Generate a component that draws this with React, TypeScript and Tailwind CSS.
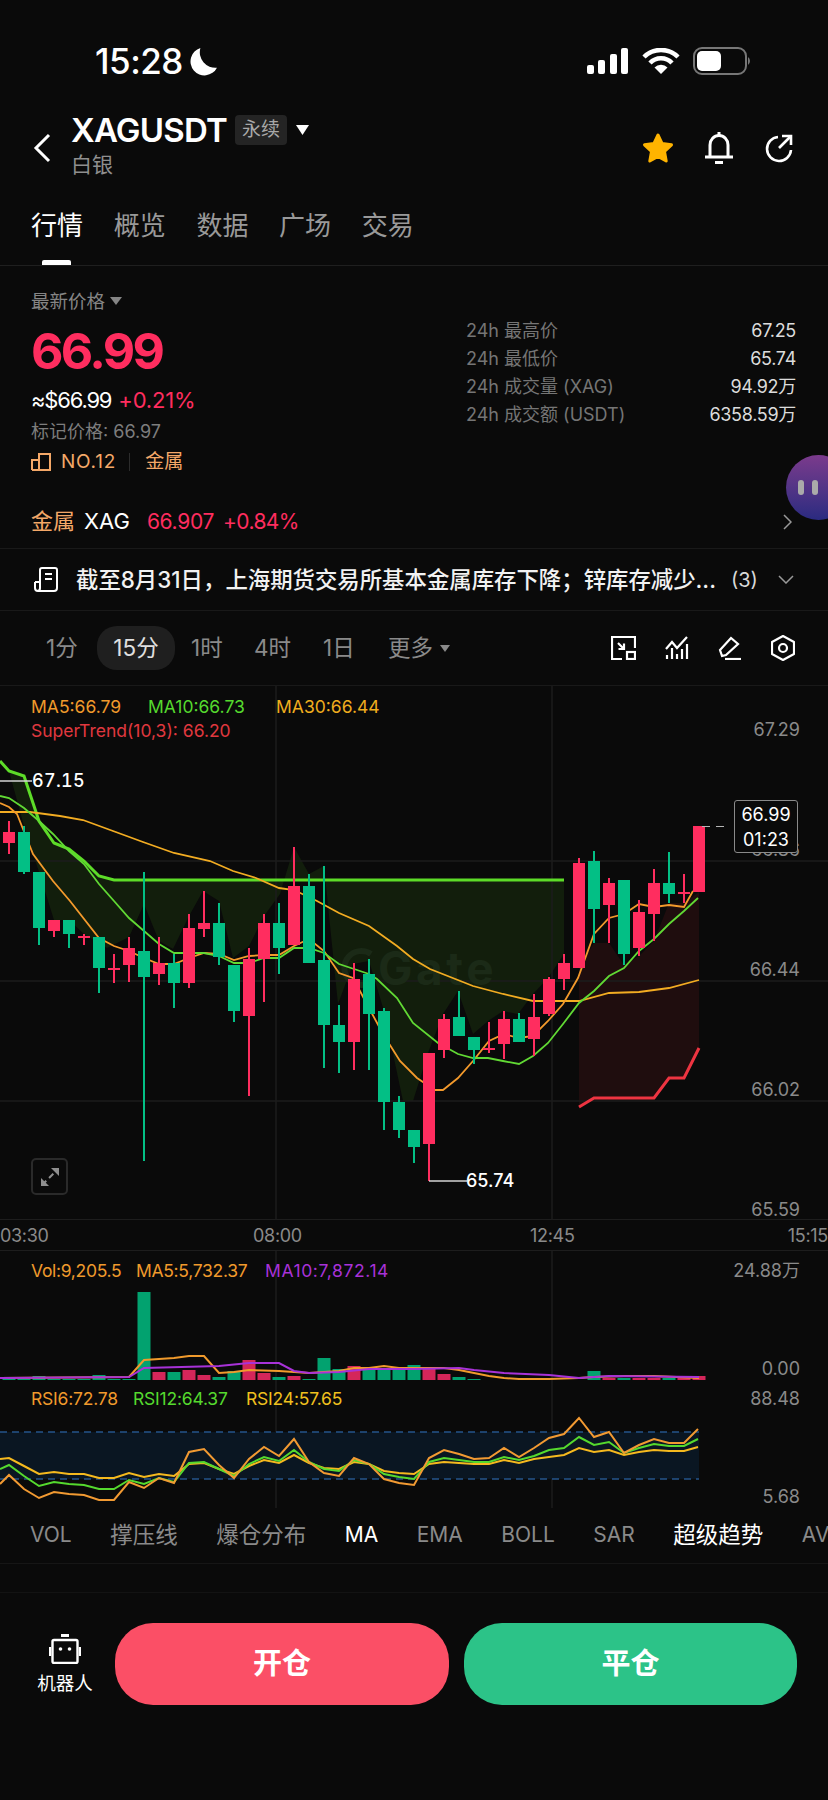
import React from "react";

const LATIN = "font-['Inter','Noto_Sans_CJK_SC',sans-serif]";

// wickTop, bodyTop, bodyBottom, wickBottom, red
const candles: [number, number, number, number, number][] = [
  [820, 831, 842, 853, 1], [825, 831, 871, 873, 0], [871, 871, 927, 944, 0], [919, 919, 930, 936, 1],
  [919, 919, 933, 947, 0], [933, 935, 937, 944, 1], [936, 936, 967, 992, 0], [953, 967, 969, 982, 1],
  [936, 947, 964, 981, 1], [871, 950, 976, 1160, 0], [936, 962, 973, 984, 1], [953, 962, 982, 1007, 0],
  [913, 927, 982, 987, 1], [890, 922, 928, 936, 1], [902, 922, 956, 964, 0], [964, 964, 1010, 1021, 0],
  [947, 958, 1015, 1095, 1], [913, 922, 958, 1001, 1], [902, 922, 947, 973, 0], [846, 885, 944, 944, 1],
  [873, 885, 962, 962, 0], [865, 959, 1024, 1067, 0], [1004, 1024, 1041, 1072, 0], [962, 978, 1041, 1069, 1],
  [958, 973, 1013, 1069, 0], [1007, 1010, 1101, 1129, 0], [1095, 1101, 1129, 1137, 0], [1129, 1129, 1146, 1162, 0],
  [1052, 1052, 1143, 1180, 1], [1013, 1018, 1049, 1057, 1], [990, 1016, 1035, 1035, 0], [1036, 1036, 1049, 1063, 0],
  [1021, 1047, 1049, 1052, 1], [1010, 1018, 1043, 1058, 1], [1012, 1018, 1041, 1041, 0], [993, 1016, 1038, 1055, 1],
  [976, 978, 1013, 1015, 1], [953, 962, 978, 989, 1], [857, 862, 967, 967, 1], [850, 860, 908, 942, 0],
  [877, 882, 904, 942, 1], [879, 879, 953, 964, 0], [899, 911, 947, 955, 1], [868, 882, 913, 940, 1],
  [851, 882, 893, 902, 0], [873, 891, 893, 902, 1], [825, 825, 891, 891, 1],
];

const vols = [1, 1, 4, 1, 1, 1, 5, 1, 1, 88, -8, 8, -10, -5, 3, 9, -20, -7, 3, -4, 1, 22, 11, -14, 12, 10, 10, 15, -11, -6, 3, 1, 0, 0, 0, 0, 0, 0, 0, 9, -2, 2, -2, -2, 2, -3, -4];

const bull = "0,760 9,770 24,775 39,820 54,842 69,848 84,860 99,875 114,879 564,879";
const bullBottom = "564,953 548,977 533,993 518,1013 503,1010 488,1020 473,1033 458,990 443,1013 428,1052 413,1100 403,1100 384,1010 369,960 353,963 338,1003 324,865 309,873 294,846 280,893 264,915 249,945 233,957 219,900 203,890 189,915 173,948 159,940 144,903 129,936 107,947 84,933 69,919 54,919 39,871 24,825 9,770";

const ma5 = "0,802 9,806 17,813 33,853 53,880 70,900 99,937 114,945 129,950 144,957 159,963 174,963 189,957 204,952 219,953 234,959 249,955 264,954 279,954 294,945 309,938 324,950 339,972 353,977 369,1007 383,1033 400,1060 417,1077 435,1089 443,1089 458,1077 473,1060 489,1040 504,1033 519,1037 533,1035 548,1020 563,1003 578,977 594,933 609,917 624,913 639,903 654,906 669,904 684,906 693,890";
const ma10 = "0,795 9,797 24,807 39,820 53,833 69,850 84,863 99,883 114,900 129,917 144,930 159,943 174,952 189,952 204,952 219,955 234,962 249,962 264,957 279,957 294,947 309,947 324,952 339,963 354,968 369,973 377,978 397,997 413,1022 438,1042 458,1053 473,1057 488,1057 503,1060 519,1063 533,1055 548,1042 563,1023 579,1002 594,990 609,975 624,967 639,950 654,938 669,923 684,910 698,897";
const ma30 = "0,811 30,811 60,815 83,819 113,830 143,841 174,852 210,860 233,870 256,877 279,887 294,889 317,900 339,912 369,925 397,945 413,958 430,968 473,985 503,993 533,1000 563,1000 579,1000 609,992 639,991 669,987 699,979";

const volMa5 = "0,1377 129,1376 144,1359 159,1358 174,1357 189,1355 204,1355 219,1372 234,1371 249,1369 279,1370 309,1372 339,1370 354,1367 369,1367 384,1365 399,1367 414,1367 444,1367 459,1369 474,1372 489,1375 504,1377 519,1378 549,1378 579,1377 594,1376 624,1375 654,1375 699,1377";
const volMa10 = "0,1377 129,1376 144,1367 219,1365 249,1362 279,1362 294,1370 309,1372 339,1371 369,1368 414,1368 459,1367 474,1369 504,1372 549,1374 579,1377 609,1375 699,1376";
const rsi6 = "0,1483 9,1474 24,1488 39,1497 54,1491 69,1493 84,1494 99,1499 114,1499 129,1481 144,1487 159,1477 174,1482 189,1451 204,1448 219,1464 234,1477 249,1458 264,1446 279,1455 294,1438 309,1461 324,1472 339,1475 354,1457 369,1463 384,1478 399,1482 414,1484 429,1457 444,1449 459,1453 474,1458 489,1457 504,1447 519,1456 534,1447 549,1437 564,1433 579,1417 594,1436 609,1431 624,1452 639,1444 654,1438 669,1442 684,1442 698,1428";
const rsi12 = "0,1468 9,1464 24,1475 39,1485 54,1481 69,1483 84,1484 99,1488 114,1488 129,1479 144,1483 159,1477 174,1481 189,1462 204,1461 219,1468 234,1475 249,1463 264,1456 279,1460 294,1449 309,1461 324,1468 339,1470 354,1459 369,1463 384,1473 399,1476 414,1478 429,1461 444,1457 459,1459 474,1461 489,1461 504,1456 519,1459 534,1455 549,1449 564,1447 579,1436 594,1444 609,1441 624,1452 639,1447 654,1443 669,1445 684,1445 698,1438";
const rsi24 = "0,1458 9,1457 24,1465 39,1473 54,1471 69,1473 84,1473 99,1477 114,1477 129,1472 144,1476 159,1473 174,1475 189,1463 204,1462 219,1468 234,1473 249,1465 264,1459 279,1462 294,1454 309,1462 324,1467 339,1468 354,1461 369,1463 384,1470 399,1472 414,1473 429,1463 444,1461 459,1462 474,1463 489,1463 504,1459 519,1462 534,1458 549,1456 564,1454 579,1447 594,1451 609,1449 624,1454 639,1451 654,1449 669,1450 684,1450 698,1446";

function MainChart() {
  return (
    <svg viewBox="0 685 828 534" className="absolute inset-0 w-[828px] h-[534px]">
      <polygon points={bull + " " + bullBottom} fill="#121e0c" />
      <polygon points="579,966 594,942 609,942 624,964 639,955 654,940 669,902 684,902 699,891 699,1047 684,1077 669,1077 654,1097 594,1097 579,1106" fill="#1f0d0e" />
      {[860, 980, 1100].map((y) => (
        <line key={y} x1="0" x2="828" y1={y} y2={y} stroke="#1d1d1d" strokeWidth="1.5" />
      ))}
      {[276, 552].map((x) => (
        <line key={x} x1={x} x2={x} y1="685" y2="1219" stroke="#1d1d1d" strokeWidth="1.5" />
      ))}
      <path d="M371 953 A17 17 0 1 0 371 981" fill="none" stroke="#1b2a17" strokeWidth="6" />
      <text x="378" y="984" fill="#1b2a17" fontSize="46" fontWeight="700" letterSpacing="3.5" fontFamily="Inter, sans-serif">Gate</text>
      <polyline points={bull} fill="none" stroke="#5ddc28" strokeWidth="3" />
      <polyline points="579,1106 594,1097 654,1097 669,1077 684,1077 699,1047" fill="none" stroke="#ee3441" strokeWidth="3" />
      <polyline points={ma30} fill="none" stroke="#f2ac22" strokeWidth="1.8" />
      <polyline points={ma5} fill="none" stroke="#f39a2c" strokeWidth="1.8" />
      <polyline points={ma10} fill="none" stroke="#61d934" strokeWidth="1.8" />
      {candles.map((c, i) => {
        const x = 9 + i * 15;
        const color = c[4] ? "#ff2d5f" : "#03bf85";
        return (
          <g key={i}>
            <line x1={x} x2={x} y1={c[0]} y2={c[3]} stroke={color} strokeWidth="2" />
            <rect x={x - 6} y={c[1]} width="12" height={c[2] - c[1]} fill={color} />
          </g>
        );
      })}
      <polyline points="0,780 32,780" fill="none" stroke="#d4d4d4" strokeWidth="1.5" />
      <polyline points="429,1180 467,1180" fill="none" stroke="#d4d4d4" strokeWidth="1.5" />
      <line x1="702" x2="730" y1="825.5" y2="825.5" stroke="#b5b5b5" strokeWidth="1" strokeDasharray="8 6" />
    </svg>
  );
}

function SubChart() {
  return (
    <svg viewBox="0 1250 828 260" className="absolute inset-0 w-[828px] h-[260px]">
      {[276, 552].map((x) => (
        <line key={x} x1={x} x2={x} y1="1250" y2="1507" stroke="#1d1d1d" strokeWidth="1.5" />
      ))}
      {vols.map((v, i) =>
        v === 0 ? null : (
          <rect key={i} x={9 + i * 15 - 6.5} y={1379 - Math.abs(v)} width="13" height={Math.abs(v)} fill={v < 0 ? "#d4265a" : "#02a26f"} />
        )
      )}
      <polyline points={volMa5} fill="none" stroke="#f09a2c" strokeWidth="2" />
      <polyline points={volMa10} fill="none" stroke="#a832d8" strokeWidth="2" />
      <rect x="0" y="1431" width="699" height="47" fill="#0a1622" />
      <line x1="0" x2="699" y1="1431" y2="1431" stroke="#24548a" strokeWidth="1.5" strokeDasharray="7 5" />
      <line x1="0" x2="699" y1="1478" y2="1478" stroke="#24548a" strokeWidth="1.5" strokeDasharray="7 5" />
      <polyline points={rsi24} fill="none" stroke="#f5b91e" strokeWidth="2" />
      <polyline points={rsi12} fill="none" stroke="#55d92e" strokeWidth="2" />
      <polyline points={rsi6} fill="none" stroke="#f29a32" strokeWidth="2" />
    </svg>
  );
}

function StatRow({ label, value }: { label: string; value: string }) {
  return (
    <div className="flex h-[28px] items-center justify-between text-[18px]">
      <span className="text-[#757575]">{label}</span>
      <span className="tracking-[-0.3px] text-[#dcdcdc]">{value}</span>
    </div>
  );
}

function AxisLabel({ top, children }: { top: string; children: React.ReactNode }) {
  return (
    <span className={`absolute right-[28px] ${top} text-[18px] leading-[22px] text-[#8a8a8a]`}>{children}</span>
  );
}

export default function App() {
  return (
    <div className={`${LATIN} relative flex h-[1800px] w-[828px] flex-col overflow-hidden bg-[#0a0a0a] text-white`}>
      {/* Status bar */}
      <div className="flex h-[100px] items-start justify-between pl-[95px] pr-[76px] pt-[42px]">
        <div className="flex items-center gap-[6px]">
          <span className="text-[35px] font-medium leading-[38px] tracking-[-0.5px]">15:28</span>
          <svg width="29" height="29" viewBox="0 0 28 28">
            <path d="M11 1 A13.5 13.5 0 1 0 27 20 A15 15 0 0 1 11 1 Z" fill="#fff" />
          </svg>
        </div>
        <div className="flex items-center gap-[13px] pt-[5px]">
          <svg width="42" height="26" viewBox="0 0 42 26" fill="#fff">
            <rect x="0" y="17" width="7" height="9" rx="2" />
            <rect x="11" y="12" width="7" height="14" rx="2" />
            <rect x="23" y="6" width="7" height="20" rx="2" />
            <rect x="34" y="0" width="7" height="26" rx="2" />
          </svg>
          <svg width="38" height="26" viewBox="0 0 38 26" fill="none" stroke="#fff" strokeWidth="4.5">
            <path d="M2 9 A24 24 0 0 1 36 9" />
            <path d="M8 15 A15 15 0 0 1 30 15" />
            <path d="M19 26 L12.5 19.5 A9 9 0 0 1 25.5 19.5 Z" fill="#fff" stroke="none" />
          </svg>
          <svg width="59" height="28" viewBox="0 0 59 28">
            <rect x="1" y="1" width="52" height="26" rx="8" fill="none" stroke="#777" strokeWidth="2" />
            <rect x="4" y="4" width="24" height="20" rx="5" fill="#fff" />
            <path d="M55 10 A5 5 0 0 1 55 18 Z" fill="#777" />
          </svg>
        </div>
      </div>

      {/* Header */}
      <div className="flex h-[104px] items-start justify-between pl-[33px] pr-[34px] pt-[12px]">
        <div className="flex items-start">
          <svg width="18" height="30" viewBox="0 0 18 30" fill="none" stroke="#fff" strokeWidth="3" className="mt-[21px]">
            <polyline points="16,2 3,15 16,28" />
          </svg>
          <div className="ml-[20px] flex flex-col">
            <div className="flex items-center">
              <span className="text-[33px] font-semibold leading-[36px] tracking-[-0.8px]">XAGUSDT</span>
              <span className="ml-[8px] flex h-[30px] w-[52px] items-center justify-center rounded-[4px] bg-[#242424] text-[19px] text-[#a8a8a8]">永续</span>
              <svg width="13" height="10" viewBox="0 0 13 10" fill="#fff" className="ml-[9px]">
                <polygon points="0,0 13,0 6.5,10" />
              </svg>
            </div>
            <span className="mt-[3px] text-[21px] leading-[28px] text-[#8f8f8f]">白银</span>
          </div>
        </div>
        <div className="flex items-center gap-[30px] pt-[19px]">
          <svg width="32" height="32" viewBox="0 0 32 32">
            <polygon points="16,3 20,11.5 29.5,12.8 22.5,19.5 24.2,29 16,24.5 7.8,29 9.5,19.5 2.5,12.8 12,11.5" fill="#ffb400" stroke="#ffb400" strokeWidth="3" strokeLinejoin="round" />
          </svg>
          <svg width="30" height="33" viewBox="0 0 30 33" fill="none" stroke="#fff" strokeWidth="3">
            <path d="M15 1 V5" />
            <path d="M6 25 V14 A9 9.5 0 0 1 24 14 V25" />
            <path d="M1 26 H29" />
            <path d="M11 31.5 H19" />
          </svg>
          <svg width="30" height="30" viewBox="0 0 30 30" fill="none" stroke="#fff" strokeWidth="2.6">
            <path d="M14 4 A12 12 0 1 0 27 17" />
            <path d="M15 15 L26 4" />
            <path d="M18 3 H27 V12" />
          </svg>
        </div>
      </div>

      {/* Tabs */}
      <div className="flex h-[62px] gap-[30.7px] border-b border-[#1f1f1f] pl-[31px] pt-[8px] text-[26px] leading-[28px] text-[#999]">
        <div className="relative text-white">
          行情
          <div className="absolute left-[11px] top-[48px] h-[5px] w-[29px] rounded-t-[2px] bg-white" />
        </div>
        <span>概览</span>
        <span>数据</span>
        <span>广场</span>
        <span>交易</span>
      </div>

      {/* Price block */}
      <div className="flex h-[212px] justify-between pl-[31px] pr-[32px] pt-[25px]">
        <div className="flex flex-col">
          <div className="flex items-center gap-[5px] text-[18.5px] leading-[20px] text-[#858585]">
            最新价格
            <svg width="12" height="8" viewBox="0 0 12 8" fill="#858585">
              <polygon points="0,0 12,0 6,8" />
            </svg>
          </div>
          <span className="mt-[11px] text-[50px] font-bold leading-[58px] tracking-[-2.6px] text-[#ff2d5f]">66.99</span>
          <div className="mt-[7px] flex gap-[7px] text-[22px] leading-[26px]">
            <span className="tracking-[-1.2px]">≈$66.99</span>
            <span className="tracking-[-0.2px] text-[#ff2d5f]">+0.21%</span>
          </div>
          <span className="mt-[8px] text-[18px] leading-[22px] text-[#7d7d7d]">标记价格: 66.97</span>
          <div className="mt-[8px] flex items-center text-[19px] leading-[22px] text-[#f4a868]">
            <svg width="20" height="18" viewBox="0 0 20 18" fill="none" stroke="#f4a868" strokeWidth="2">
              <path d="M1 17 V7 H8 M8 17 V1 H19 V17 H1" />
            </svg>
            <span className="ml-[10px] tracking-[0.8px]">NO.12</span>
            <span className="ml-[13px] mr-[15px] h-[18px] w-px bg-[#2c2c2c]" />
            <span>金属</span>
          </div>
        </div>
        <div className="mt-[25px] flex w-[330px] flex-col">
          <StatRow label="24h 最高价" value="67.25" />
          <StatRow label="24h 最低价" value="65.74" />
          <StatRow label="24h 成交量 (XAG)" value="94.92万" />
          <StatRow label="24h 成交额 (USDT)" value="6358.59万" />
        </div>
      </div>

      {/* Sector row */}
      <div className="flex h-[71px] items-center border-b border-[#191919] pl-[31px] pr-[36px] pt-[17px] text-[22px]">
        <span className="text-[#f4a868]">金属</span>
        <span className="ml-[9px]">XAG</span>
        <span className="ml-[17px] text-[21px] tracking-[-0.3px] text-[#ff2d5f]">66.907</span>
        <span className="ml-[9px] text-[21px] tracking-[-0.6px] text-[#ff2d5f]">+0.84%</span>
        <svg width="9" height="16" viewBox="0 0 9 16" fill="none" stroke="#999" strokeWidth="1.5" className="ml-auto">
          <polyline points="1,1 8,8 1,15" />
        </svg>
      </div>

      {/* News row */}
      <div className="flex h-[62px] items-center border-b border-[#191919] pl-[34px] pr-[34px]">
        <svg width="24" height="25" viewBox="0 0 24 25" fill="none" stroke="#fff" strokeWidth="2">
          <path d="M6 16 V3 A2 2 0 0 1 8 1 H21 A2 2 0 0 1 23 3 V21 A3 3 0 0 1 20 24 H4" />
          <path d="M1 15 H6 M1 15 V21 A3 3 0 0 0 4 24 A3 3 0 0 0 6 21 V16" />
          <path d="M11 7 H18 M11 12 H18" />
        </svg>
        <span className="ml-[18px] whitespace-nowrap text-[22.4px] font-medium text-[#f2f2f2]">截至8月31日，上海期货交易所基本金属库存下降；锌库存减少...</span>
        <span className="ml-[15px] text-[20px] text-[#d8d8d8]">(3)</span>
        <svg width="16" height="9" viewBox="0 0 16 9" fill="none" stroke="#999" strokeWidth="1.5" className="ml-auto">
          <polyline points="1,1 8,8 15,1" />
        </svg>
      </div>

      {/* Interval row */}
      <div className="flex h-[75px] items-center border-b border-[#191919] pl-[46px] pr-[33px] text-[22.5px] text-[#8a8a8a]">
        <span className="w-[34px] whitespace-nowrap">1分</span>
        <span className="ml-[17px] flex h-[44px] w-[78px] items-center justify-center rounded-[20px] bg-[#1f1f1f] text-[#e0e0e0]">15分</span>
        <span className="ml-[16px] w-[34px] whitespace-nowrap">1时</span>
        <span className="ml-[29px] w-[34px] whitespace-nowrap">4时</span>
        <span className="ml-[35px] w-[33px] whitespace-nowrap">1日</span>
        <span className="ml-[32px] whitespace-nowrap">更多</span>
        <svg width="10" height="7" viewBox="0 0 10 7" fill="#8a8a8a" className="ml-[7px]">
          <polygon points="0,0 10,0 5,7" />
        </svg>
        <div className="ml-auto flex items-center gap-[29px]">
          <svg width="25" height="24" viewBox="0 0 25 24" fill="none" stroke="#fff" strokeWidth="2.2">
            <path d="M11 23 H1 V1 H24 V12" />
            <path d="M7 7 L13 13 M7.5 13 H13 V7.5" />
            <rect x="16" y="16" width="8" height="7" />
          </svg>
          <svg width="24" height="24" viewBox="0 0 24 24" fill="none" stroke="#fff" strokeWidth="2.2">
            <polyline points="1,13 7,6 12,12 22,1" />
            <path d="M2 19 V23 M7 12 V23 M12 18 V23 M17 13 V23 M22 8 V23" />
          </svg>
          <svg width="24" height="24" viewBox="0 0 24 24" fill="none" stroke="#fff" strokeWidth="2.2">
            <path d="M4 20 L2 14 L13 2 L20 8 L8 19 Z" />
            <path d="M7 23 H23" />
          </svg>
          <svg width="24" height="26" viewBox="0 0 24 26" fill="none" stroke="#fff" strokeWidth="2.2">
            <polygon points="12,1 23,7 23,19 12,25 1,19 1,7" strokeLinejoin="round" />
            <circle cx="12" cy="13" r="4" />
          </svg>
        </div>
      </div>

      {/* Main chart */}
      <div className="relative h-[534px] border-b border-[#1d1d1d]">
        <MainChart />
        <div className="relative flex flex-col gap-[1px] pl-[31px] pt-[9px] text-[17.5px] leading-[23px]">
          <div className="flex">
            <span className="w-[117px] text-[#f09a2c]">MA5:66.79</span>
            <span className="w-[128px] text-[#55d92e]">MA10:66.73</span>
            <span className="text-[#f0ad1e]">MA30:66.44</span>
          </div>
          <span className="text-[#e0383f]">SuperTrend(10,3): 66.20</span>
        </div>
        <AxisLabel top="top-[33px]">67.29</AxisLabel>
        <AxisLabel top="top-[153px]">66.86</AxisLabel>
        <AxisLabel top="top-[273px]">66.44</AxisLabel>
        <AxisLabel top="top-[393px]">66.02</AxisLabel>
        <AxisLabel top="top-[513px]">65.59</AxisLabel>
        <div className="absolute left-[734px] top-[114px] flex h-[53px] w-[64px] flex-col items-center justify-center rounded-[3px] border border-[#8a8a8a] bg-[#0a0a0a] text-[18px] leading-[25px]">
          <span>66.99</span>
          <span>01:23</span>
        </div>
        <span className="absolute left-[32px] top-[84px] text-[18px] font-medium tabular-nums leading-[22px] tracking-[0.3px]">67.15</span>
        <span className="absolute left-[466px] top-[484px] text-[18px] font-medium leading-[22px]">65.74</span>
        <div className="absolute left-[31px] top-[472px] flex h-[37px] w-[37px] items-center justify-center rounded-[5px] border-2 border-[#2a2a2a]">
          <svg width="20" height="20" viewBox="0 0 20 20" fill="none" stroke="#8f8f8f" strokeWidth="2">
            <path d="M2 18 L18 2" strokeDasharray="6 4" />
            <polygon points="11,1 19,1 19,9" fill="#8f8f8f" stroke="none" />
            <polygon points="1,11 1,19 9,19" fill="#8f8f8f" stroke="none" />
          </svg>
        </div>
      </div>

      {/* Time axis */}
      <div className="relative flex h-[31px] items-center justify-between border-b border-[#1d1d1d] text-[18px] tracking-[-0.3px] text-[#8a8a8a]">
        <span>03:30</span>
        <span className="absolute left-[253px]">08:00</span>
        <span className="absolute left-[530px]">12:45</span>
        <span>15:15</span>
      </div>

      {/* Volume and RSI */}
      <div className="relative h-[259px]">
        <SubChart />
        <div className="relative flex pl-[31px] pt-[9px] text-[17.5px] leading-[22px] tracking-[-0.3px]">
          <span className="w-[105px] text-[#f09a2c]">Vol:9,205.5</span>
          <span className="w-[129px] text-[#f09a2c]">MA5:5,732.37</span>
          <span className="tracking-[0.6px] text-[#a832d8]">MA10:7,872.14</span>
        </div>
        <div className="relative mt-[106px] flex pl-[31px] text-[17.5px] leading-[22px] tracking-[-0.2px]">
          <span className="w-[102px] text-[#f09a2c]">RSI6:72.78</span>
          <span className="w-[113px] text-[#55d92e]">RSI12:64.37</span>
          <span className="text-[#f0c01e]">RSI24:57.65</span>
        </div>
        <AxisLabel top="top-[9px]">24.88万</AxisLabel>
        <AxisLabel top="top-[107px]">0.00</AxisLabel>
        <AxisLabel top="top-[137px]">88.48</AxisLabel>
        <AxisLabel top="top-[235px]">5.68</AxisLabel>
      </div>

      {/* Indicator tabs */}
      <div className="flex h-[54px] items-center gap-[38.5px] overflow-hidden whitespace-nowrap border-b border-[#161616] pb-[3px] pl-[30px] text-[22.5px] text-[#8a8a8a]">
        <span className="text-[21px]">VOL</span>
        <span>撑压线</span>
        <span>爆仓分布</span>
        <span className="text-[21px] text-white">MA</span>
        <span className="text-[21px]">EMA</span>
        <span className="text-[21px]">BOLL</span>
        <span className="text-[21px]">SAR</span>
        <span className="text-white">超级趋势</span>
        <span className="text-[21px]">AVL</span>
      </div>

      {/* Spacer strip */}
      <div className="h-[29px] border-b border-[#131313]" />

      {/* Bottom actions */}
      <div className="flex items-start pl-[37px] pr-[31px] pt-[30px]">
        <div className="flex w-[56px] flex-col items-center pt-[11px]">
          <svg width="32" height="30" viewBox="0 0 32 30" fill="none" stroke="#fff" strokeWidth="2.4">
            <rect x="3.5" y="6" width="25" height="23" rx="1.5" />
            <path d="M12 1.5 H20" strokeWidth="3" />
            <path d="M1 13 V22 M31 13 V22" />
            <circle cx="11.5" cy="15" r="1.8" fill="#fff" stroke="none" />
            <circle cx="20.5" cy="15" r="1.8" fill="#fff" stroke="none" />
          </svg>
          <span className="mt-[8px] whitespace-nowrap text-[18.5px] leading-[22px]">机器人</span>
        </div>
        <button className="ml-[22px] flex h-[82px] w-[334px] items-center justify-center rounded-[38px] bg-[#fb4f66] text-[29px] font-semibold">开仓</button>
        <button className="ml-[15px] flex h-[82px] w-[333px] items-center justify-center rounded-[38px] bg-[#2cc388] text-[29px] font-semibold">平仓</button>
      </div>

      {/* Floating assistant */}
      <div className="absolute right-[-23px] top-[455px] h-[65px] w-[65px] rounded-full bg-gradient-to-b from-[#7b3a8c] to-[#2a2a80]">
        <div className="absolute left-[12px] top-[25px] h-[15px] w-[6px] rounded-full bg-[#aaa]" />
        <div className="absolute left-[26px] top-[25px] h-[15px] w-[6px] rounded-full bg-[#aaa]" />
      </div>
    </div>
  );
}
